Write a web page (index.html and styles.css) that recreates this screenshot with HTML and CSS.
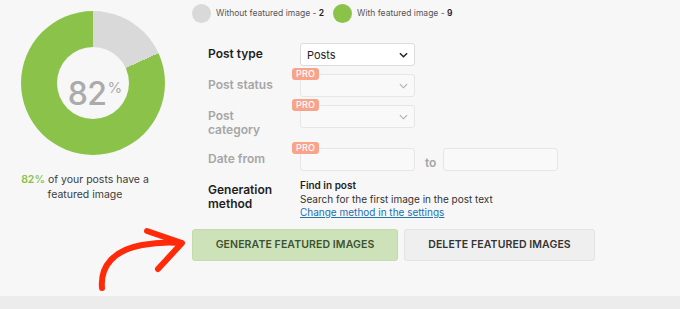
FILE: index.html
```html
<!DOCTYPE html>
<html lang="en">
<head>
  <meta charset="UTF-8" />
  <title>Featured Images</title>
  <link rel="stylesheet" href="styles.css">
</head>
<body>
  <div class="panel">
    <div class="stats">
      <div class="donut">
        <div class="donut-hole"><span class="num">82</span><span class="pct">%</span></div>
      </div>
      <p class="caption"><b>82%</b> of your posts have a featured image</p>
    </div>

    <div class="main">
      <div class="legend">
        <span class="dot dot-grey"></span><span>Without featured image - <b>2</b></span>
        <span class="dot dot-green"></span><span>With featured image - <b>9</b></span>
      </div>

      <div class="form">
        <div class="row">
          <label>Post type</label>
          <div class="field">
            <div class="select">Posts <svg viewBox="0 0 10 6"><path d="M1 1l4 4 4-4"/></svg></div>
          </div>
        </div>
        <div class="row off">
          <label>Post status</label>
          <div class="field">
            <span class="pro">PRO</span>
            <div class="select"><svg viewBox="0 0 10 6"><path d="M1 1l4 4 4-4"/></svg></div>
          </div>
        </div>
        <div class="row off">
          <label>Post<br>category</label>
          <div class="field">
            <span class="pro">PRO</span>
            <div class="select"><svg viewBox="0 0 10 6"><path d="M1 1l4 4 4-4"/></svg></div>
          </div>
        </div>
        <div class="row off date-row">
          <label>Date from</label>
          <div class="field">
            <span class="pro">PRO</span>
            <div class="input"></div>
          </div>
          <span class="to">to</span>
          <div class="input"></div>
        </div>
        <div class="row gen">
          <label>Generation<br>method</label>
          <div class="method">
            <b>Find in post</b><br>
            Search for the first image in the post text<br>
            <a href="#">Change method in the settings</a>
          </div>
        </div>
      </div>

      <div class="actions">
        <button class="btn btn-gen">GENERATE FEATURED IMAGES</button>
        <button class="btn btn-del">DELETE FEATURED IMAGES</button>
      </div>
    </div>

    <svg class="arrow" viewBox="0 0 680 309" width="680" height="309">
      <path d="M102 288 C100 266 114 250 142 245 C158 242 171 242 181 243"/>
      <path d="M147 231 L182 243 L158 269"/>
    </svg>
  </div>
  <footer class="band"></footer>
</body>
</html>
```

FILE: styles.css
```css
:root{--green:#8bc34a;--grey:#d9d9d9;--bg:#f7f7f7;--text:#1f1f1f;--muted:#a6a6a6;--pro:#f8a48b;}
*{box-sizing:border-box;margin:0;padding:0}
body{font-family:Inter,"Noto Sans",sans-serif;background:var(--bg);color:var(--text);width:680px;height:309px;overflow:hidden}
.panel{position:relative;display:flex;height:296px}
.band{height:13px;background:#ececec}

/* left: donut */
.stats{width:186px;padding-top:11px;display:flex;flex-direction:column;align-items:center}
.donut{width:144px;height:144px;border-radius:50%;background:conic-gradient(var(--grey) 0 18.2%,var(--green) 18.2% 100%);display:flex;align-items:center;justify-content:center}
.donut-hole{width:72px;height:72px;border-radius:50%;background:var(--bg);display:flex;align-items:center;justify-content:center;color:#ababab;padding:21px 0 0 4px}
.num{font-size:32px;font-weight:500;line-height:32px;letter-spacing:-.5px}
.pct{font-size:15px;line-height:15px;align-self:flex-start;margin-top:12px;margin-left:1px}
.caption{margin:17px 16px 0 0;text-align:center;font-size:10.5px;line-height:15px;color:#3c3c3c;width:150px}
.caption b{color:var(--green);font-weight:600}

/* right */
.main{padding-left:6px;padding-top:3px}
.legend{display:flex;align-items:center;height:20px;font-size:8.5px;color:#555;margin-bottom:20px}
.legend b{color:#222;font-weight:600}
.dot{width:19px;height:19px;border-radius:50%;margin-right:5px}
.dot-grey{background:var(--grey)}
.dot-green{background:var(--green);margin-left:9px}

.form{padding-left:16px}
.row{display:flex;align-items:flex-start;margin-bottom:8px}
.row label{width:92px;padding-top:4px;font-size:12px;line-height:14px;font-weight:600;color:#1f1f1f}
.row.off label{color:var(--muted)}
.row:nth-child(3){margin-bottom:11px}
.field{position:relative}
.select,.input{width:115px;height:23px;border:1px solid #dcdcdc;border-radius:3px;background:#fff;display:flex;align-items:center;justify-content:space-between;padding:0 6px 0 6px;font-size:11px;color:#222}
.select svg{width:9px;height:6px;margin-left:auto;fill:none;stroke:#222;stroke-width:1.6}
.off .select,.off .input{background:#f9f9f9;border-color:#e6e6e6}
.off .select svg{stroke:#aaa;stroke-width:1.2}
.pro{position:absolute;left:-8px;top:-6px;background:var(--pro);color:#fff;font-size:9px;font-weight:500;line-height:12px;padding:0 4px;border-radius:3px;letter-spacing:.2px}
.to{font-size:12px;font-weight:600;color:var(--muted);margin:7px 7px 0 10px}
.method{font-size:10px;line-height:13.5px;color:#333}
.method b{font-weight:600;color:#1f1f1f}
.method a{color:#2271b1}

.actions{display:flex;gap:6px;margin-top:9px}
.btn{height:32px;border-radius:3px;font-family:inherit;font-size:10.5px;font-weight:600;letter-spacing:.1px;cursor:pointer}
.btn-gen{width:206px;background:#cde2b9;border:1px solid #c3dbad;color:#3d5330}
.btn-del{width:191px;background:#efefef;border:1px solid #e2e2e2;color:#333}

.arrow{position:absolute;left:0;top:0;pointer-events:none;fill:none;stroke:#ff2a0a;stroke-width:6;stroke-linecap:round;stroke-linejoin:round}
```
